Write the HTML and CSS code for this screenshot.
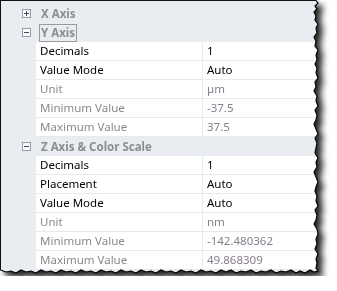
FILE: index.html
```html
<!DOCTYPE html>
<html lang="en">
<head>
  <meta charset="UTF-8">
  <title>Axis Properties</title>
  <link rel="stylesheet" href="styles.css">
</head>
<body>
  <div class="sheet">
    <div class="panel">
      <div class="group">
        <span class="expander plus"></span>
        <span class="label">X Axis</span>
      </div>
      <div class="group">
        <span class="expander"></span>
        <span class="label focused">Y Axis</span>
      </div>
      <div class="row"><span class="name">Decimals</span><span class="value">1</span></div>
      <div class="row"><span class="name">Value Mode</span><span class="value">Auto</span></div>
      <div class="row off"><span class="name">Unit</span><span class="value">µm</span></div>
      <div class="row off"><span class="name">Minimum Value</span><span class="value">-37.5</span></div>
      <div class="row off"><span class="name">Maximum Value</span><span class="value">37.5</span></div>
      <div class="group">
        <span class="expander"></span>
        <span class="label">Z Axis &amp; Color Scale</span>
      </div>
      <div class="row"><span class="name">Decimals</span><span class="value">1</span></div>
      <div class="row"><span class="name">Placement</span><span class="value">Auto</span></div>
      <div class="row"><span class="name">Value Mode</span><span class="value">Auto</span></div>
      <div class="row off"><span class="name">Unit</span><span class="value">nm</span></div>
      <div class="row off"><span class="name">Minimum Value</span><span class="value">-142.480362</span></div>
      <div class="row off"><span class="name">Maximum Value</span><span class="value">49.868309</span></div>
    </div>
    <svg class="edge" width="322" height="276" viewBox="0 0 322 276">
      <polyline points="316,0.5 318,3 315,6 317,9 314,12 316,16 315,20 318,24 316,28 317,33 314,37 316,41 315,46 318,50 316,55 317,60 315,64 317,68 316,73 318,78 315,82 316,87 314,91 317,96 316,101 318,106 315,110 317,115 316,120 314,124 316,129 318,134 315,138 317,143 316,148 315,153 318,158 316,162 317,167 314,172 316,177 318,182 316,187 315,191 317,196 316,201 318,206 315,210 317,215 316,220 314,224 317,229 318,234 316,239 317,244 315,249 318,254 316,259 317,263 316,268 318,271 314,272 310,270 305,273 300,271 296,273 291,270 286,272 281,271 276,273 271,270 266,272 261,271 256,273 251,270 246,272 241,271 236,273 231,270 226,272 221,270 216,273 211,271 206,272 201,270 196,273 191,271 186,272 181,270 176,273 171,271 166,272 161,270 156,273 151,271 146,272 141,270 136,273 131,271 126,272 121,270 116,273 111,271 106,272 101,270 96,273 91,271 86,272 81,270 76,273 71,271 66,272 61,270 56,273 51,271 46,272 41,270 36,273 31,271 26,272 21,270 16,273 11,271 6,272 0.5,270" fill="none" stroke="#000" stroke-width="1.2"/>
    </svg>
  </div>
</body>
</html>
```

FILE: styles.css
```css
body {
  margin: 0;
  background: #fff;
  font-family: "Noto Sans", "Open Sans", sans-serif;
  font-size: 11.5px;
}
.sheet {
  position: relative;
  width: 322px;
  height: 276px;
  filter: drop-shadow(5px 5px 3px rgba(0, 0, 0, 0.85));
}
.panel {
  width: 322px;
  height: 276px;
  box-sizing: border-box;
  padding-top: 3px;
  background: #e9ecf0;
  border-top: 1px solid #111;
  border-left: 1px solid #111;
  clip-path: polygon(0 0, 316px 0, 318px 3px, 315px 6px, 317px 9px, 314px 12px, 316px 16px, 315px 20px, 318px 24px, 316px 28px, 317px 33px, 314px 37px, 316px 41px, 315px 46px, 318px 50px, 316px 55px, 317px 60px, 315px 64px, 317px 68px, 316px 73px, 318px 78px, 315px 82px, 316px 87px, 314px 91px, 317px 96px, 316px 101px, 318px 106px, 315px 110px, 317px 115px, 316px 120px, 314px 124px, 316px 129px, 318px 134px, 315px 138px, 317px 143px, 316px 148px, 315px 153px, 318px 158px, 316px 162px, 317px 167px, 314px 172px, 316px 177px, 318px 182px, 316px 187px, 315px 191px, 317px 196px, 316px 201px, 318px 206px, 315px 210px, 317px 215px, 316px 220px, 314px 224px, 317px 229px, 318px 234px, 316px 239px, 317px 244px, 315px 249px, 318px 254px, 316px 259px, 317px 263px, 316px 268px, 318px 271px, 314px 272px, 310px 270px, 305px 273px, 300px 271px, 296px 273px, 291px 270px, 286px 272px, 281px 271px, 276px 273px, 271px 270px, 266px 272px, 261px 271px, 256px 273px, 251px 270px, 246px 272px, 241px 271px, 236px 273px, 231px 270px, 226px 272px, 221px 270px, 216px 273px, 211px 271px, 206px 272px, 201px 270px, 196px 273px, 191px 271px, 186px 272px, 181px 270px, 176px 273px, 171px 271px, 166px 272px, 161px 270px, 156px 273px, 151px 271px, 146px 272px, 141px 270px, 136px 273px, 131px 271px, 126px 272px, 121px 270px, 116px 273px, 111px 271px, 106px 272px, 101px 270px, 96px 273px, 91px 271px, 86px 272px, 81px 270px, 76px 273px, 71px 271px, 66px 272px, 61px 270px, 56px 273px, 51px 271px, 46px 272px, 41px 270px, 36px 273px, 31px 271px, 26px 272px, 21px 270px, 16px 273px, 11px 271px, 6px 272px, 0 270px);
}
.edge {
  position: absolute;
  left: 0;
  top: 0;
}
.group {
  height: 19px;
  display: flex;
  align-items: center;
  color: #8a8d91;
  font-weight: bold;
}
.expander {
  box-sizing: border-box;
  width: 9px;
  height: 9px;
  margin-left: 21px;
  margin-right: 8px;
  border: 1px solid #959ca6;
  background: #fbfbfc;
  position: relative;
}
.expander::before,
.plus::after {
  content: "";
  position: absolute;
  background: #3b4c70;
}
.expander::before {
  left: 1px;
  top: 3px;
  width: 5px;
  height: 1px;
}
.plus::after {
  left: 3px;
  top: 1px;
  width: 1px;
  height: 5px;
}
.label {
  padding: 0 1px;
  line-height: 16px;
  border: 1px solid transparent;
}
.focused {
  border-color: #9a9a9a;
}
.row {
  display: flex;
  height: 19px;
  margin-left: 35px;
  box-sizing: border-box;
  background: #fff;
  border-bottom: 1px solid #e6e9ee;
  color: #000;
}
.row span {
  line-height: 18px;
  padding-left: 4px;
  white-space: nowrap;
}
.name {
  width: 162px;
  border-right: 1px solid #e6e9ee;
}
.row.off .name {
  color: #8a8a8a;
}
.row.off .value {
  color: #857d8a;
}
```
